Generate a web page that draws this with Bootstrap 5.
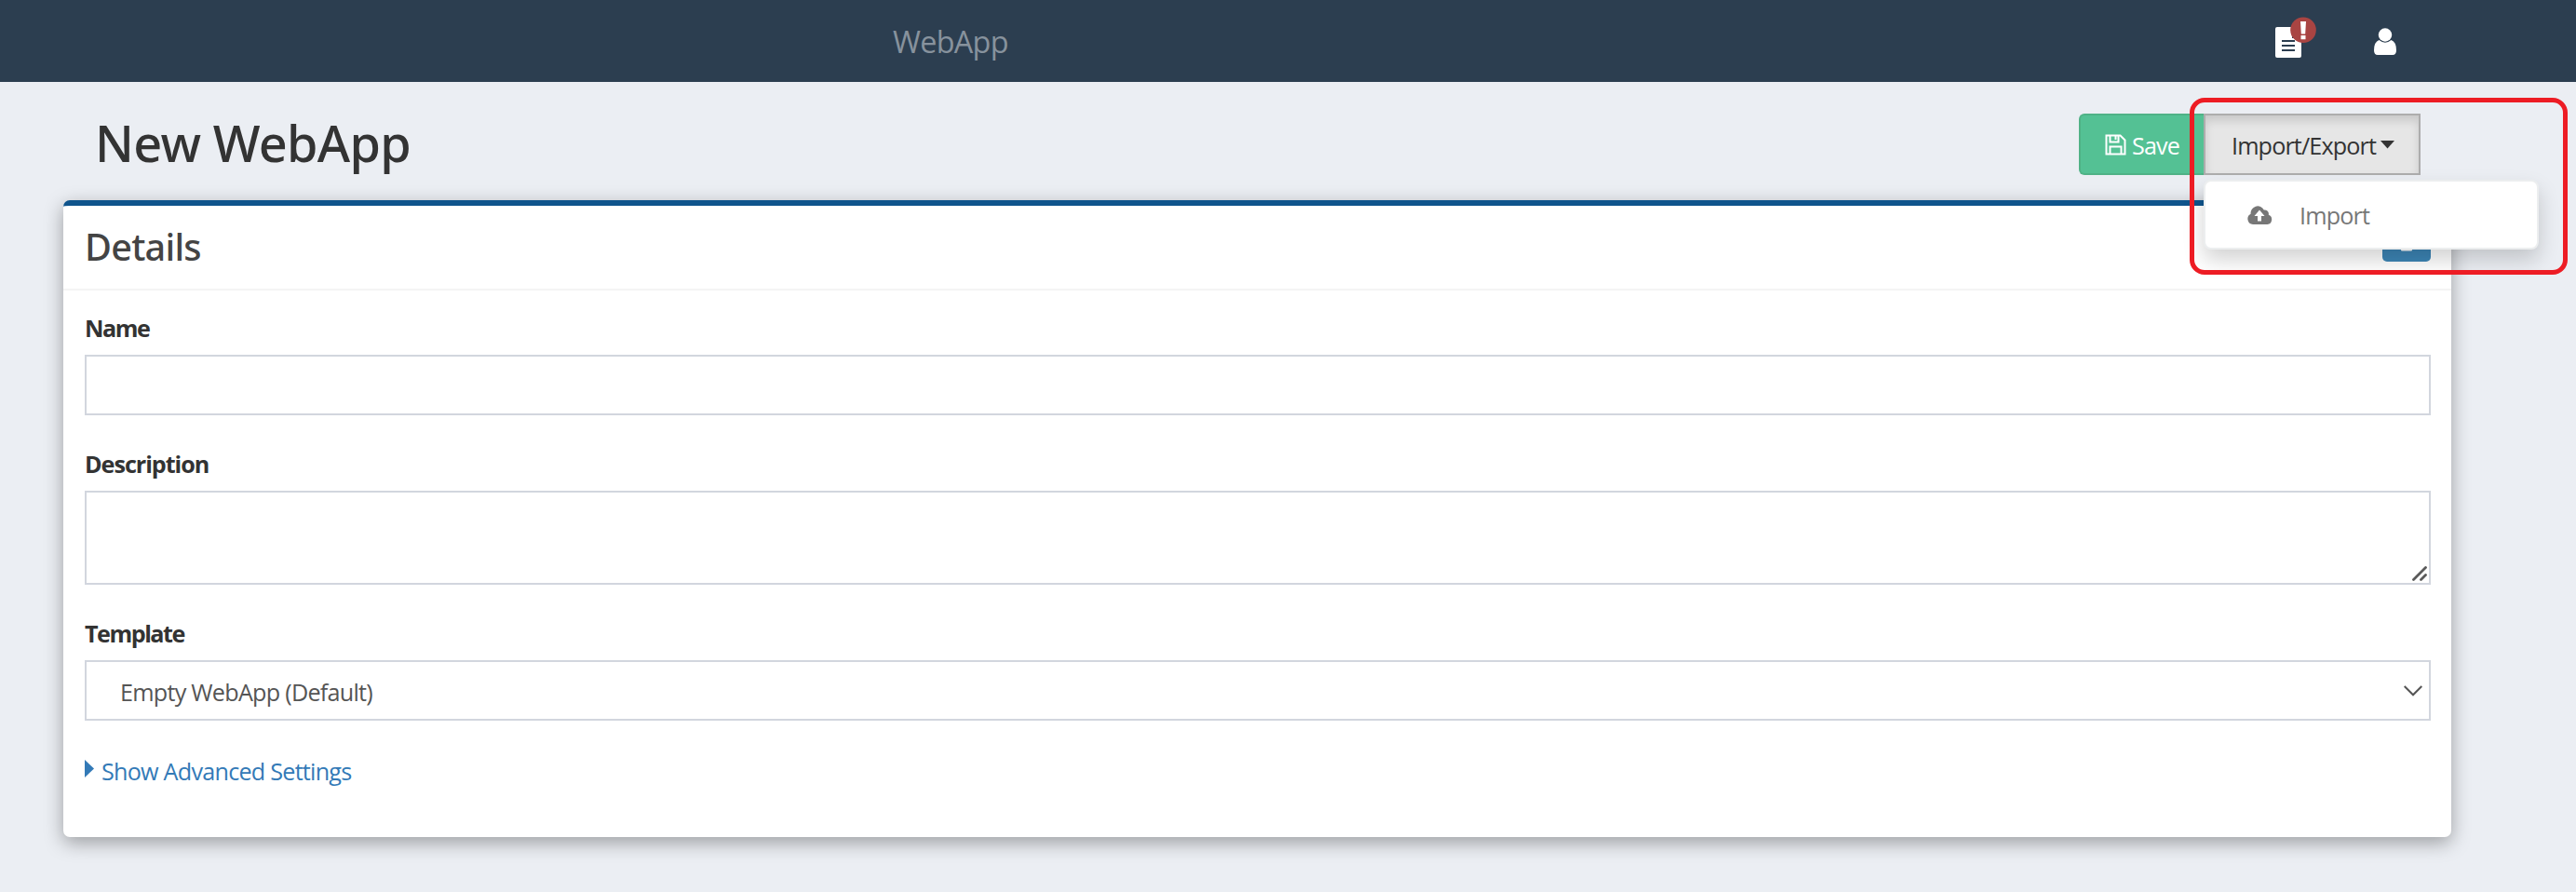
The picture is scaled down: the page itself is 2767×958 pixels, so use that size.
<!DOCTYPE html>
<html lang="en">
<head>
<meta charset="utf-8">
<meta name="viewport" content="width=device-width, initial-scale=1">
<title>New WebApp</title>
<link rel="stylesheet" href="https://cdn.jsdelivr.net/npm/bootstrap@5.3.0/dist/css/bootstrap.min.css">
<style>
body{background:#ebeef3;font-family:"Open Sans","Noto Sans",sans-serif;font-size:25.2px;line-height:36px;color:#333;min-height:958px;overflow:hidden}
h1,h2{font-family:"Noto Sans","Open Sans",sans-serif}
svg{display:block;flex:none}
.topbar{height:88px;background:#2c3e50}
.brand-name{margin-left:959px;font-size:32.4px;line-height:40px;color:#87929d;letter-spacing:-.7px}
.top-icons{margin-right:178px;gap:59px}
.page-head{height:127px;padding:34px 167px 0 102px}
.page-head h1{font-size:54px;line-height:60px;font-weight:500;letter-spacing:-.7px;margin:1px 0 0}
.tool-btn{height:66px;border:2px solid;border-radius:0;font-size:25.2px;line-height:36px;padding:1px 0 0;white-space:nowrap;letter-spacing:-.87px}
.btn-group>.btn.tool-btn{flex:none}
.btn-save,.btn-save:hover{width:134px;background:#54c194;border-color:#4fb286;color:#fff;border-radius:6px 0 0 6px;border-right:0;padding-left:26px;gap:6px}
.btn-impexp,.btn-impexp:hover{width:233px;background:#e6e6e6;border-color:#adadad;color:#333;box-shadow:inset 0 6px 10px rgba(0,0,0,.125);padding-left:28px;gap:5px}
.impexp-menu{left:134px;top:71px;width:360px;height:75px;border:2px solid #eceeef;border-radius:8px;box-shadow:0 11px 22px rgba(0,0,0,.175);padding:0 0 0 45px;z-index:5}
.impexp-menu a{color:#777;gap:29px;letter-spacing:-.85px}
.callout{left:2352px;top:105px;width:406px;height:190px;border:5px solid #ed1c24;border-radius:16px;z-index:10;pointer-events:none}
.panel{margin:0 134px 0 68px;height:684px;border:0;border-top:6px solid #0f548c;border-radius:7px;box-shadow:0 6px 20px rgba(0,0,0,.34)}
.panel-head{height:91px;border-bottom:2px solid #f4f4f4;padding:0 22px 0 23px}
.panel-head h2{font-size:39.6px;line-height:44px;font-weight:500;color:#444;margin:0 0 2px;letter-spacing:-.75px}
.btn-collapse{width:52px;height:55px;margin-top:5px;background:#3c85b5;border-radius:5px;border:0;padding:0}
.panel-main{padding:22px 22px 0 23px}
.field{margin-bottom:34px}
.field label{display:block;font-weight:700;margin-bottom:11px;letter-spacing:-1.05px}
.field .lbl-tight{letter-spacing:-1.5px}
.field .form-control,.field .form-select{border:2px solid #d2d6de;border-radius:0;height:65px;font-size:25.2px;color:#555;box-shadow:none;background-color:#fff}
.field textarea.form-control{height:101px;resize:none}
.grip{right:4px;bottom:4px}
.field .form-select{padding:4px 0 0 36px;background-image:none;line-height:56px;letter-spacing:-.75px}
.chev{right:9px;top:27px}
.adv{color:#337ab7;gap:8px;letter-spacing:-.77px}
.adv svg{margin-top:-3px}
</style>
</head>
<body>
<nav class="topbar d-flex align-items-center justify-content-between">
  <span class="brand-name">WebApp</span>
  <div class="top-icons d-flex align-items-center">
    <svg width="46" height="88" viewBox="2444 0 46 88"><path fill="#fff" d="M2446 29H2462V41H2472V60Q2472 62 2470 62H2446Q2444 62 2444 60V31Q2444 29 2446 29Z"/><path stroke="#2c3e50" stroke-width="2" d="M2451 44h14M2451 49h14M2451 54h14"/><circle cx="2474" cy="32.300" r="13.800" fill="#a94442"/><path fill="#fff" d="M2471 23h6l-.8 13.500h-4.400zM2471.500 38h5v4.200h-5z"/></svg>
    <svg width="40" height="88" viewBox="2549 0 40 88"><circle cx="2562" cy="37.500" r="7.200" fill="#fff"/><path fill="#fff" d="M2555.500 43Q2562 48.500 2568.500 43Q2574 45 2574 54Q2574 59 2570 59H2554Q2550 59 2550 54Q2550 45 2555.500 43Z"/></svg>
  </div>
</nav>
<header class="page-head d-flex align-items-start justify-content-between">
  <h1>New WebApp</h1>
  <div class="btn-group position-relative">
    <button class="btn tool-btn btn-save d-flex align-items-center" type="button">
      <svg width="23" height="23" viewBox="0 0 23 23" fill="none" stroke="#fff" stroke-width="2"><path d="M1.500 1.500H16.500L21.500 6.500V21.500H1.500ZM5.500 21V13.500H17.500V21M5.500 2V8.500H14.500V2M11.500 2V6"/></svg>
      <span>Save</span>
    </button>
    <button class="btn tool-btn btn-impexp d-flex align-items-center ms-0" type="button">
      <span>Import/Export</span>
      <svg width="15" height="9" viewBox="0 0 15 9"><path fill="#333" d="M0 0H15L7.500 8.500Z"/></svg>
    </button>
    <div class="impexp-menu position-absolute bg-white d-flex align-items-center">
      <a href="#" class="d-flex align-items-center text-decoration-none">
        <svg width="27" height="20" viewBox="0 0 27 20"><path fill="#777" fill-rule="evenodd" d="M6 20A6 6 0 0 1 3.600 8.700A7.500 7.500 0 0 1 17.800 4.600A4.300 4.300 0 0 1 22.800 9.800A5.300 5.300 0 0 1 21.500 20ZM13 4.500L7.500 11H11V16.500H15V11H18.500Z"/></svg>
        <span>Import</span>
      </a>
    </div>
  </div>
</header>
<main class="card panel">
  <div class="panel-head d-flex align-items-center justify-content-between">
    <h2>Details</h2>
    <button class="btn btn-collapse d-flex justify-content-center align-self-start" type="button" aria-label="Collapse"><svg width="52" height="55" viewBox="0 0 52 55"><rect x="20" y="40" width="12" height="3.500" rx="1" fill="#fff"/></svg></button>
  </div>
  <div class="panel-main">
    <div class="field"><label for="name" class="lbl-tight">Name</label><input id="name" class="form-control" type="text"></div>
    <div class="field"><label for="desc">Description</label>
      <div class="position-relative d-flex"><textarea id="desc" class="form-control"></textarea>
      <svg class="grip position-absolute" width="16" height="16" viewBox="0 0 16 16" stroke="#5a5a5a" stroke-width="2.800" stroke-linecap="round"><path d="M1.500 14.500L14.500 1.500M9.500 14.500L14.500 9.500"/></svg></div></div>
    <div class="field"><label for="tpl" class="lbl-tight">Template</label>
      <div class="position-relative"><div id="tpl" class="form-select" role="combobox">Empty WebApp (Default)</div>
      <svg class="chev position-absolute" width="20" height="12" viewBox="0 0 20 12" fill="none" stroke="#555" stroke-width="2"><path d="M.700 1L10 10.300L19.300 1"/></svg></div></div>
    <a href="#" class="adv d-inline-flex align-items-center text-decoration-none"><svg width="10" height="20" viewBox="0 0 10 20"><path fill="#337ab7" d="M0 0L10 9.500L0 19Z"/></svg><span>Show Advanced Settings</span></a>
  </div>
</main>
<div class="callout position-absolute"></div>
<script src="https://cdn.jsdelivr.net/npm/bootstrap@5.3.0/dist/js/bootstrap.bundle.min.js"></script>
</body>
</html>
